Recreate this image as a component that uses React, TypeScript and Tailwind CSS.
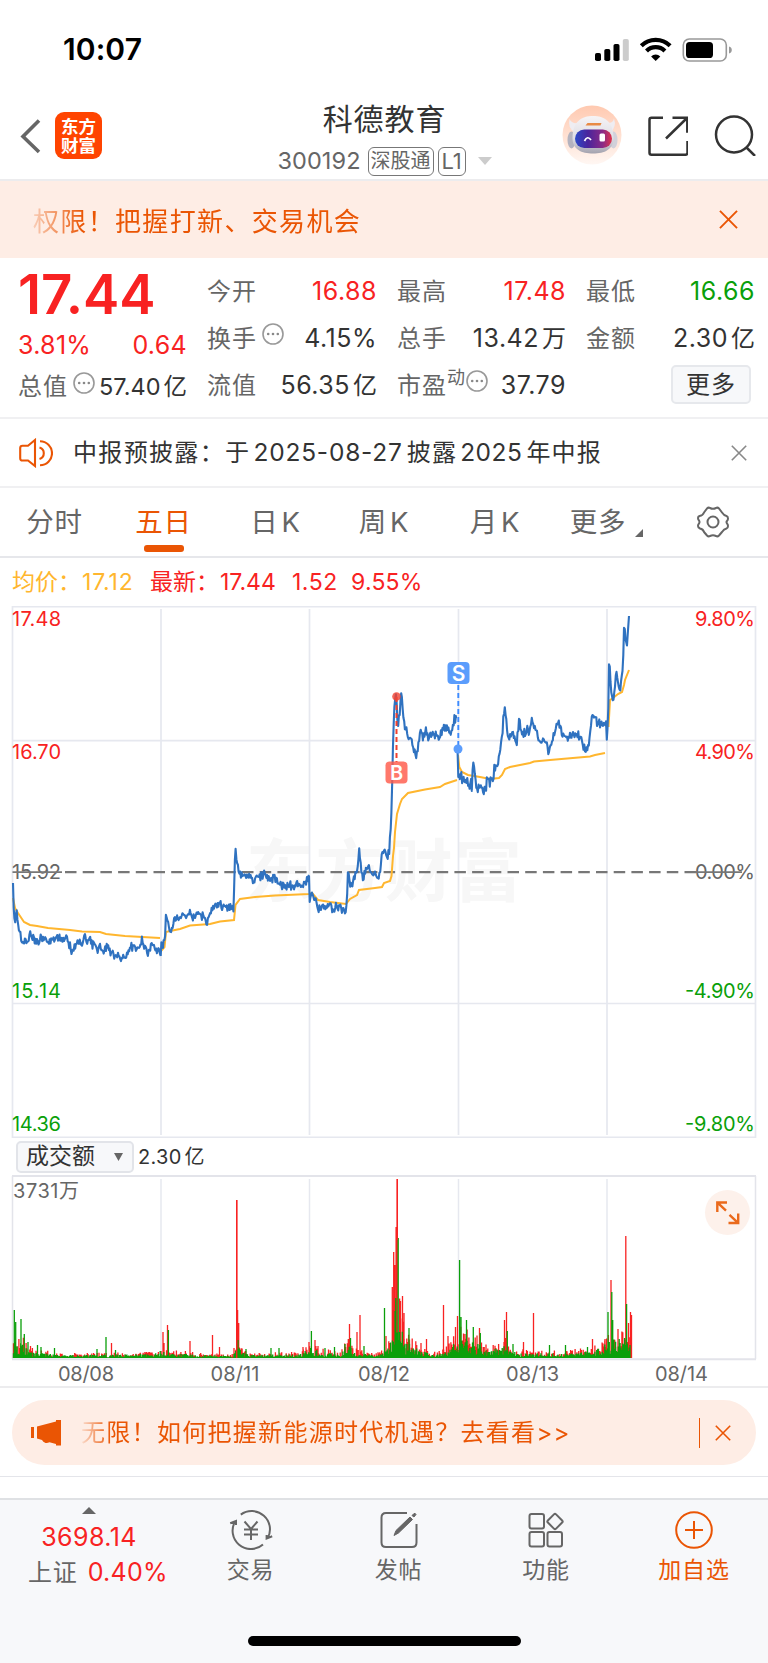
import type { ReactNode } from "react"

type Point = [number, number, number?]

// small seeded generator so the chart always draws the same way
const random = (seed: number) => () => {
  seed = (seed * 16807) % 2147483647
  return seed / 2147483647
}

const interpolate = (points: Point[], x: number) => {
  const i = Math.max(1, points.findIndex((p) => p[0] >= x))
  const [x0, y0] = points[i - 1]
  const [x1, y1] = points[i]
  return y0 + ((y1 - y0) * (x - x0)) / (x1 - x0 || 1)
}

const toPath = (points: Point[]) => "M" + points.map((p) => p[0].toFixed(1) + " " + p[1].toFixed(1)).join("L")

const priceDays: Point[][] = [
  [[13,883],[13.6,912],[15,920],[16.5,910],[18,922],[20,932],[22,942],[23.5,946],[25,938],[27,944],[30,933],[33,936],[35,939],[38,943],[40,936],[44,937],[47,942],[50,941],[54,941],[57,934],[61,941],[66,940],[69,945],[71,949],[74,950],[77,942],[82,944],[84,937],[87,940],[90,938],[93,946],[97,949],[100,947],[103,952],[107,946],[110,950],[114,955],[118,954],[122,959],[126,956],[130,948],[134,946],[138,948],[142,940],[144,947],[148,951],[152,944],[156,950],[160,952],[160.7,956]],
  [[160.7,956],[162,940],[163.5,946],[165,937],[166,911],[168,926],[171,932],[173,925],[176,918],[180,919],[183,914],[187,917],[190,911],[193,919],[198,914],[203,917],[208,921],[211,908],[214,907],[218,902],[222,905],[226,907],[230,909],[233.5,907],[234.2,890],[235.3,845],[237,862],[239,873],[243,876],[247,879],[250,876],[254,881],[260,876],[265,875],[270,878],[275,877],[278,884],[283,886],[290,885],[300,886],[304,885],[308,879],[309,875]],
  [[309,876],[309.6,904],[312,890],[315,900],[318,910],[322,905],[326,910],[330,903],[333,911],[337,906],[340,908],[343,908],[345.5,917],[347,900],[348,866],[350,886],[353,881],[355,874],[357,873],[359,852],[361,866],[363,881],[366,866],[369,869],[372,873],[375,874],[378,880],[381,867],[382,851],[385,849],[387,857],[389,853],[390.3,834],[391.5,812],[393,745],[394.5,704],[395.5,691],[397,712],[398,728],[400,712],[401.5,690],[403,715],[405,727],[407,729],[409,740],[412,739],[414,751],[416,757],[418,747],[421,727],[423,742],[425.5,727],[428,736],[433,733],[440,737],[443,730],[446,726],[450,732],[453,726],[454.5,718],[456,718]],
  [[457.6,752],[458,778],[461,776],[464,780],[467,781],[470,785],[471.5,788],[473,760],[476,785],[479,792],[481,776],[484,794],[487,779],[491,786],[494,768],[497,764],[500,752],[502,735],[504.6,707],[507,726],[509,738],[512,732],[514,738],[516.5,747],[519,722],[523,734],[527,730],[530,733],[532,720],[535,726],[538,736],[541,742],[545,740],[549,752],[552,742],[555,731],[558.5,720],[561,732],[566,737],[570,737],[574,732],[579,737],[582,741],[585,750],[589,744],[591,724],[593,715],[597,722],[601,723],[604,725],[605.4,724],[605.8,710],[606.6,743],[608,725],[609.2,656],[611,690],[613,701],[615,688],[616.3,671],[618,682],[620,694],[622,672],[623,666],[624.2,622],[625.5,640],[627,646],[629,616]],
]

const averageDays: Point[][] = [
  [[13,898],[15,908],[18,913],[24,922],[30,925],[37,926],[48,928],[70,930],[82,931.5],[100,932],[106,934],[125,936],[160,938]],
  [[161,951],[164.5,947],[166,932],[170,931],[180,929],[190,925.5],[210,924],[220,921.5],[234,920],[235.5,905],[240,899],[255,897],[275,895.5],[309,894]],
  [[309,894],[312,893],[318,900],[330,902],[346,904],[350,899],[357,895],[359,890],[375,888],[382,887],[384,883],[390,881],[391.5,876],[393,856],[394,848],[395,832],[397,814],[400,804],[402,799],[408,793],[425,789.5],[440,787],[445,784],[457,780]],
  [[458,755],[459.3,767],[462,772],[468,775],[480,777],[490,779],[499,778],[502,775],[505,769],[510,767],[530,763],[534,761.5],[550,760],[590,756.5],[595,755],[605,753]],
  [[608.5,727],[610,700],[613,698],[618,694],[622,692],[624,685],[625,680],[629,670]],
]

const rand = random(4711)
const pricePath = priceDays
  .map((day) => {
    const out: Point[] = [day[0]]
    for (let x = day[0][0] + 0.7; x < day[day.length - 1][0]; x += 0.75) {
      out.push([x, interpolate(day, x) + (rand() - 0.5) * (x > 458 && x < 495 ? 17 : x > 606 ? 5 : 10) * (rand() > 0.35 ? 1 : 0.4)])
    }
    out.push(day[day.length - 1])
    return toPath(out)
  })
  .join("")
const averagePath = averageDays.map(toPath).join("")

const volumeEnvelope: Point[] = [[13,26],[20,20],[30,8],[45,6],[60,3.5],[150,5],[160,10],[168,6],[185,6],[200,4],[233,3],[238,16],[242,8],[250,4],[300,5],[310,14],[320,8],[332,6],[340,4],[348,18],[356,8],[366,6],[375,3],[383,8],[390,14],[395,75],[399,60],[405,22],[420,12],[430,5],[440,6],[450,12],[458,25],[470,22],[480,17],[490,10],[503,14],[507,20],[515,8],[530,6],[560,6],[590,8],[600,14],[608,22],[615,24],[625,28],[632,34]]
const redSpikes: Point[] = [[30.5,12],[111.5,15],[163,26],[164,15],[167.5,33],[190,17],[212.5,23],[219.5,11],[234,10],[236.7,158],[237.6,48],[238.7,35],[303,11],[309,16],[315,18],[318,12],[349.5,34],[357,26],[360,43],[386,22],[392.3,71],[393.7,106],[395,93],[396.4,131],[397.3,179],[400.5,57],[402.5,62],[404,45],[421,15],[426.5,19],[443.5,53],[448,22],[455.5,31],[457.5,42],[465,24],[479.5,30],[504.5,38],[506.5,46],[523.5,16],[533.5,45],[592.5,19],[605,19],[611,78],[618,29],[625.8,122],[628.5,35],[630.5,46],[631.5,43]]
const greenSpikes: Point[] = [[14.3,48],[15.7,36],[21,39],[24.3,24],[28,16],[37.5,13],[41,11],[54.5,10],[97,9],[106,21],[115.5,8],[168.4,28],[238,18],[246,9],[271,10],[279,10],[311.4,27],[325,10],[334.5,11],[345,14],[350.5,20],[364,12],[384.5,50],[395.8,60],[398.2,120],[409,30],[459.6,98],[461,41],[466.5,38],[473.3,31],[480.3,25],[507.3,27],[513,14],[549.5,13],[565.5,13],[587.5,11],[608,46],[611.8,66],[612.7,38],[626.6,54]]

const bar = (x: number, h: number) => `M${x.toFixed(1)} 1358v${(-h).toFixed(1)}`
let redBars = ""
let greenBars = ""
for (let x = 13.5; x < 631.5; x += 0.9) {
  const h = interpolate(volumeEnvelope, x)
  const up = rand()
  if (up > 0.4 || x > 630) redBars += bar(x, h * (0.4 + rand() * 0.9))
  greenBars += x > 630 ? "" : bar(x, h * (0.15 + rand() * 0.65))
}
redSpikes.forEach((p) => (redBars += bar(p[0], p[1])))
greenSpikes.forEach((p) => (greenBars += bar(p[0], p[1])))

const gridX = [161, 309.5, 458.5, 607]

const axisLabels = [
  { y: 618.5, price: "17.48", pct: "9.80%", fill: "fill-[#f82222]" },
  { y: 751.5, price: "16.70", pct: "4.90%", fill: "fill-[#f82222]" },
  { y: 871.5, price: "15.92", pct: "0.00%", fill: "fill-[#666]" },
  { y: 991, price: "15.14", pct: "-4.90%", fill: "fill-[#0a9f0a]" },
  { y: 1123.5, price: "14.36", pct: "-9.80%", fill: "fill-[#0a9f0a]" },
]

function Dots() {
  return (
    <svg className="size-[22px] shrink-0" viewBox="0 0 22 22" fill="none" stroke="#999" strokeWidth="1.6">
      <circle cx="11" cy="11" r="10" />
      <g fill="#888" stroke="none">
        <circle cx="6.2" cy="11" r="1.3" />
        <circle cx="11" cy="11" r="1.3" />
        <circle cx="15.8" cy="11" r="1.3" />
      </g>
    </svg>
  )
}

function Close({ className }: { className: string }) {
  return (
    <svg className={className} viewBox="0 0 20 20" fill="none" stroke="currentColor" strokeWidth="2">
      <path d="M1 1l18 18M19 1L1 19" />
    </svg>
  )
}

function Stat({ label, value, unit, color = "text-[#333]", mark }: { label: string; value: string; unit?: string; color?: string; mark?: ReactNode }) {
  return (
    <div className="flex h-[47px] items-center justify-between whitespace-nowrap">
      <span className="flex items-center text-2xl tracking-[1px] text-[#666]">
        {label}
        {mark}
      </span>
      <span className={"text-[25px] tracking-[0.5px] " + color}>
        {value}
        {unit && <span className="ml-[3px] text-2xl tracking-normal">{unit}</span>}
      </span>
    </div>
  )
}

function StatusBar() {
  return (
    <div className="flex h-[90px] items-center justify-between pt-2 pr-[35px] pl-[63px]">
      <span className="text-[30px] font-semibold tracking-[0.1px] text-black">10:07</span>
      <svg className="mb-[1px] h-[26px] w-[138px]" viewBox="595 35 138 26">
        <rect x="595" y="52" width="6" height="8" rx="1.8" />
        <rect x="604.3" y="48" width="6" height="12" rx="1.8" />
        <rect x="613.5" y="43" width="6" height="17" rx="1.8" />
        <rect x="622.8" y="38" width="6" height="22" rx="1.8" fill="#ccc" />
        <g fill="none" stroke="#000" strokeWidth="4.2">
          <path d="M641.3 44.7a20.5 20.5 0 0 1 28.8 0" />
          <path d="M646.5 50a13 13 0 0 1 18.4 0" />
        </g>
        <path d="M655.7 60l-4.600-4.600a6.600 6.600 0 0 1 9.200 0z" />
        <rect x="683.3" y="38" width="43" height="22" rx="6" fill="none" stroke="#999" strokeWidth="1.6" />
        <rect x="686" y="41" width="27" height="16" rx="3.6" />
        <path d="M729 45.4v7.200q2.800-.8 2.800-3.600t-2.800-3.600z" fill="#999" />
      </svg>
    </div>
  )
}

function Robot() {
  return (
    <svg className="size-[60px]" viewBox="0 0 60 60">
      <defs>
        <linearGradient id="halo" x1="0" y1="0" x2="0" y2="1">
          <stop offset="0" stopColor="#ffc9b0" />
          <stop offset="1" stopColor="#fff7f3" />
        </linearGradient>
        <linearGradient id="visor">
          <stop offset="0" stopColor="#2c49c8" />
          <stop offset=".35" stopColor="#4a259c" />
          <stop offset=".75" stopColor="#8a2a86" />
          <stop offset="1" stopColor="#e0334a" />
        </linearGradient>
        <linearGradient id="head" x1="0" y1="0" x2="0" y2="1">
          <stop offset="0" stopColor="#f6f4f6" />
          <stop offset=".6" stopColor="#dedde4" />
          <stop offset="1" stopColor="#a3a2ae" />
        </linearGradient>
      </defs>
      <circle cx="30" cy="30" r="29.5" fill="url(#halo)" />
      <path d="M7.500 14q2 5 9 4l-4 9q-7-4-5-13zM52 13.500q-1 5-7 4.500l3 10q7-6 4-14.500z" fill="#efedf2" />
      <ellipse cx="9.500" cy="35" rx="4" ry="8.500" fill="#b4b3bf" />
      <ellipse cx="51.500" cy="35" rx="4" ry="8.500" fill="#d2d1da" />
      <path d="M10.500 33C10.500 16 20 11 31 11s20.500 5 20.500 22c0 11.500-9 15.500-20.500 15.500S10.500 44.500 10.500 33z" fill="url(#head)" />
      <path d="M23.500 20.500l2-2.500h14l-1 2.500z" fill="#e88a45" />
      <rect x="13" y="24.500" width="37" height="18.500" rx="9.200" fill="url(#visor)" />
      <path d="M22.500 36q3-6 6.500-1" fill="none" stroke="#fff" strokeWidth="1.700" />
      <rect x="37.500" y="28.500" width="5.500" height="8" rx="1.500" fill="#fff" />
    </svg>
  )
}

function Header() {
  return (
    <header className="flex h-[91px] items-start justify-between border-b-2 border-[#ececee] pr-[12px] pl-[20px]">
      <div className="flex w-[170px] items-center pt-[22px]">
        <svg className="mr-[14px] h-[36px] w-[21px]" viewBox="0 0 21 36" fill="none" stroke="#666" strokeWidth="3.600">
          <path d="M19 2.500L3 18.500l16 15.500" />
        </svg>
        <div className="flex size-[47px] flex-col items-center justify-center rounded-[9px] bg-[#ff4400] text-[17.500px] leading-[19px] font-bold text-white">
          <span>东方</span>
          <span>财富</span>
        </div>
      </div>
      <div className="flex flex-col items-center pl-[17px]">
        <h1 className="mt-[7px] text-[30px] leading-[44px] tracking-[0.900px] text-[#333]">科德教育</h1>
        <div className="mt-1 flex h-[32px] items-center whitespace-nowrap text-[#666]">
          <span className="mr-[7px] text-[23.500px] tracking-[0.100px]">300192</span>
          <span className="mr-1 flex h-[29px] w-[66px] items-center justify-center rounded-[6px] border border-[#777] text-[20px]">深股通</span>
          <span className="flex h-[29px] w-[28px] items-center justify-center rounded-[6px] border border-[#777] text-[22px]">L1</span>
          <svg className="ml-[12px] h-[8px] w-[14px]" viewBox="0 0 14 8"><path d="M0 0h14L7 8z" fill="#ccc" /></svg>
        </div>
      </div>
      <div className="flex items-center pt-[15px]">
        <Robot />
        <svg className="ml-[24px] size-[42px]" viewBox="0 0 42 42" fill="none" stroke="#333" strokeWidth="2.500">
          <path d="M17 3.700H5.500q-2 0-2 2v33q0 2 2 2h34q2 0 2-2V27M26.500 3.700h14.800v15M41 4L20 24.500" />
        </svg>
        <svg className="ml-[26px] size-[42px]" viewBox="0 0 42 42" fill="none" stroke="#333" strokeWidth="2.500">
          <circle cx="20" cy="20.500" r="18" />
          <path d="M32.500 33.500l8.500 8.500" />
        </svg>
      </div>
    </header>
  )
}

function Quote() {
  return (
    <section className="flex h-[161px] border-b-2 border-[#f0f0f2] pl-[18px] whitespace-nowrap">
      <div className="mr-[20px] w-[169px]">
        <div className="h-[70px] pt-[1px] text-[54.500px] leading-[70px] font-semibold text-[#f82222]">17.44</div>
        <div className="mt-[1px] flex h-[34px] items-center justify-between text-[25px] tracking-[0.300px] text-[#f82222]">
          <span>3.81%</span>
          <span>0.64</span>
        </div>
        <div className="flex h-[48px] items-center justify-between">
          <span className="text-2xl tracking-[1px] text-[#666]">总值</span>
          <span className="mb-[9px]"><Dots /></span>
          <span className="text-[23.500px] text-[#333]">57.40<span className="ml-[3px]">亿</span></span>
        </div>
      </div>
      <div className="mr-[20px] w-[170px] pt-[10px]">
        <Stat label="今开" value="16.88" color="text-[#f82222]" />
        <Stat label="换手" value="4.15%" mark={<span className="mb-[9px] ml-[5px]"><Dots /></span>} />
        <Stat label="流值" value="56.35" unit="亿" />
      </div>
      <div className="mr-[20px] w-[169px] pt-[10px]">
        <Stat label="最高" value="17.48" color="text-[#f82222]" />
        <Stat label="总手" value="13.42" unit="万" />
        <Stat
          label="市盈"
          value="37.79"
          mark={<span className="mb-[10px] flex items-center gap-[1px]"><span className="mb-[6px] text-[18px] leading-5 tracking-normal">动</span><Dots /></span>}
        />
      </div>
      <div className="w-[169px] pt-[10px]">
        <Stat label="最低" value="16.66" color="text-[#0a9f0a]" />
        <Stat label="金额" value="2.30" unit="亿" />
        <div className="flex h-[45px] items-center justify-end pr-1">
          <button className="h-[39px] w-[80px] rounded-[5px] border-2 border-[#e6e8ec] bg-[#f7f8fa] text-2xl leading-[34px] tracking-[1px] text-[#333]">更多</button>
        </div>
      </div>
    </section>
  )
}

function Notice() {
  return (
    <div className="flex h-[69px] items-center border-b-2 border-[#f0f0f2] pr-[21px] pl-[19px]">
      <svg className="mr-[20px] h-[30px] w-[34px]" viewBox="0 0 34 30" fill="none" stroke="#ea5504" strokeWidth="2.100">
        <path d="M16 2v26l-7-5.500H3.500q-2.300 0-2.300-2.300V10q0-2.300 2.300-2.300H9z" />
        <path d="M20.500 9.500a6 6 0 0 1 0 11.500M21 3.200a12 12 0 0 1 0 24" />
      </svg>
      <span className="text-2xl tracking-[1.340px] text-[#333]">中报预披露：于</span>
      <span className="mr-1 ml-[3px] text-[24.500px] tracking-[0.800px] text-[#333]">2025-08-27</span>
      <span className="text-2xl tracking-[1.200px] text-[#333]">披露</span>
      <span className="mr-1 ml-[3px] text-[24.500px] tracking-[0.500px] text-[#333]">2025</span>
      <span className="text-2xl tracking-[1.200px] text-[#333]">年中报</span>
      <Close className="ml-auto size-[16px] text-[#888]" />
    </div>
  )
}

function Tabs() {
  return (
    <nav className="flex h-[70px] items-stretch border-b-2 border-[#e6e7eb] text-[27.500px] tracking-[0.800px] text-[#666] *:flex *:items-center *:justify-center">
      <span className="w-[109px] pt-[2px]">分时</span>
      <span className="relative w-[109px] pt-[2px] text-[#ea5504]">
        五日
        <i className="absolute bottom-1 h-[7px] w-[40px] rounded-[3px] bg-[#ea5504]" />
      </span>
      <span className="w-[115px] gap-[3px] pt-[2px]"><b className="font-normal">日</b>K</span>
      <span className="w-[102px] gap-[3px] pt-[2px]"><b className="font-normal">周</b>K</span>
      <span className="w-[120px] gap-[3px] pt-[2px]"><b className="font-normal">月</b>K</span>
      <span className="w-[103px] pt-[2px]">
        更多
        <svg className="mt-[20px] ml-[9px] size-[8px]" viewBox="0 0 8 8"><path d="M8 0v8H0z" fill="#666" /></svg>
      </span>
      <span className="w-[110px]">
        <svg className="size-[34px]" viewBox="0 0 34 34" fill="none" stroke="#666" strokeWidth="2" strokeLinejoin="round">
          <path d="M11 3.500q1.500-1.500 3-.5 3 1.500 6 0 1.500-1 3 .5l3 4q2 3 4.500 3.500 1.500.5 1.500 2.500 0 1.500-1 2.500-1 1 0 2.500 1 1 1 2.500 0 2-1.500 2.500-2.500.5-4.500 3.500l-3 3.500q-1.500 1.500-3 .5-3-1.500-6 0-1.500 1-3-.5l-3-3.500q-1-3-4-3.500Q2 22.500 2 21q0-1.500 1-2.500 1-1.500 0-3-1-1-1-2.500 0-1.500 1.500-2 3.500-.5 4.500-3.500z" />
          <circle cx="17" cy="17" r="5.500" />
        </svg>
      </span>
    </nav>
  )
}

function Chart() {
  return (
    <section className="h-[830px] border-b-2 border-[#ececee]">
      <div className="flex h-[48px] items-center pl-[12px] text-[23px] whitespace-nowrap text-[#f82222]">
        <span className="w-[70px] shrink-0 text-[#ffb62e]">均价：</span>
        <span className="w-[68px] shrink-0 tracking-[0.800px] text-[#ffb62e]">17.12</span>
        <span className="w-[70px] shrink-0">最新：</span>
        <span className="w-[72px] shrink-0">17.44</span>
        <span className="w-[59px] shrink-0 tracking-[0.500px]">1.52</span>
        <span className="tracking-[0.200px]">9.55%</span>
      </div>
      <svg className="block h-[532px] w-[768px]" viewBox="0 606 768 532">
        <text x="246" y="896" textLength="276" className="fill-[#f7f7f7] text-[68px] font-bold">东方财富</text>
        <g fill="none" stroke="#e6e8ef" strokeWidth="1.700">
          <path d="M12.500 1137.300V606.700H755.500V1137.300z" />
          <path d="M12.500 740.700H755.500M12.500 1003.500H755.500" />
          {gridX.map((x) => <path key={x} d={`M${x} 609V1135`} />)}
        </g>
        {axisLabels.map((l) => (
          <g key={l.y} className={"text-[20px] " + l.fill}>
            <text x="12" y={l.y + 7.300} textLength="49" lengthAdjust="spacing">{l.price}</text>
            <text x="755" y={l.y + 7.300} textAnchor="end" textLength={l.pct.length > 5 ? 70 : 60}>{l.pct}</text>
          </g>
        ))}
        <path d="M12.500 872.200H62M694 872.200H742" stroke="#777" strokeWidth="1.800" />
        <path d="M65 872.200H700" stroke="#777" strokeWidth="2.200" strokeDasharray="11.500 6.200" />
        <path d={averagePath} fill="none" stroke="#ffb62e" strokeWidth="2" />
        <path d={pricePath} fill="none" stroke="#2f72c0" strokeWidth="2.100" strokeLinejoin="round" />
        <path d="M396.500 697V762" stroke="#f2412f" strokeWidth="2" strokeDasharray="5 3" />
        <circle cx="396.500" cy="696.500" r="4.300" fill="#f2412f" fillOpacity=".8" />
        <rect x="385.500" y="761.500" width="22" height="22" rx="4" fill="#ff5a4a" fillOpacity=".82" />
        <text x="396.500" y="779.500" textAnchor="middle" className="fill-white text-[20px] font-semibold">B</text>
        <path d="M458.300 685V745" stroke="#3d8bff" strokeWidth="1.900" strokeDasharray="5 3" />
        <circle cx="458" cy="749" r="4.500" fill="#5b9dfc" />
        <rect x="447.500" y="662" width="22" height="22" rx="4" fill="#5b9dfc" />
        <text x="458.500" y="680.500" textAnchor="middle" className="fill-white text-[21px] font-semibold">S</text>
      </svg>
      <div className="flex h-[37px] items-center pl-4">
        <button className="flex h-[32px] w-[118px] items-center justify-between rounded-[5px] border-2 border-[#e2e4e9] bg-[#f7f8fa] pr-[9px] pl-[8px] text-[23px] text-[#333]">
          成交额
          <svg className="h-[8px] w-[9px]" viewBox="0 0 9 8"><path d="M0 0h9L4.500 8z" fill="#666" /></svg>
        </button>
        <span className="ml-1 text-[20px] tracking-[0.300px] text-[#333]">2.30<span className="ml-[3px]">亿</span></span>
      </div>
      <div className="relative">
        <svg className="block h-[211px] w-[768px]" viewBox="0 1175 768 211">
          <g fill="none" stroke="#e3e4ea" strokeWidth="1.500">
            <path d="M12.500 1176V1359M755.500 1176V1359" />
            <path d="M12 1176H756M12 1359.200H756" strokeWidth="2" />
            {gridX.map((x) => <path key={x} d={`M${x} 1179V1358`} stroke="#e6e8ef" />)}
          </g>
          <path d={redBars} stroke="#f82222" strokeWidth="1.300" />
          <path d={greenBars} stroke="#0a9f0a" strokeWidth="1.300" />
          <path d="M397.300 1179V1240M396.300 1227V1290M236.700 1200V1358" stroke="#f82222" strokeWidth="1.400" />
          <text x="13" y="1198" textLength="66" className="fill-[#666] text-[20px]">3731万</text>
          <g className="fill-[#666] text-[20px]">
            <text x="58" y="1381" textLength="56">08/08</text>
            <text x="210.500" y="1381" textLength="49">08/11</text>
            <text x="358" y="1381" textLength="52">08/12</text>
            <text x="506" y="1381" textLength="53">08/13</text>
            <text x="655" y="1381" textLength="53">08/14</text>
          </g>
        </svg>
        <button className="absolute top-[15px] right-[18px] size-[45px] rounded-full bg-[#fdf1eb]">
          <svg className="size-[45px]" viewBox="0 0 45 45" fill="none" stroke="#ea6a1c" strokeWidth="2.400">
            <path d="M12.300 22V12.500H22M12.500 12.700l8.500 8M33.200 23.500v9.500H23.500M33 32.800l-8.500-8" />
          </svg>
        </button>
      </div>
    </section>
  )
}

function Promo() {
  return (
    <div className="h-[89px] border-b border-[#e4e5ea] px-[12px] pt-[12px]">
      <div className="flex h-[65px] items-center rounded-full bg-[#feede5] pr-[25px] pl-[19px] text-[#ea5504]">
        <svg className="mr-[19px] h-[27px] w-[31px]" viewBox="0 0 31 27" fill="#ea5504">
          <path d="M0 8h3v11H0zM6 7.500L25 2.500V1h5v25.500h-5V25l-6.500-1.700q-2.500 1.200-4 .6-2.500-.8-3.500-2.900L6 19.500z" />
        </svg>
        <span className="text-2xl tracking-[1.300px] whitespace-nowrap [mask-image:linear-gradient(to_right,rgba(0,0,0,0.1),black_30px)]">
          无限！如何把握新能源时代机遇？去看看&gt;&gt;
        </span>
        <i className="ml-auto h-[30px] w-[1.500px] bg-[#ea5504]" />
        <Close className="ml-[15px] size-[16px]" />
      </div>
    </div>
  )
}

function NavItem({ width, label, color = "text-[#666]", children }: { width: string; label: string; color?: string; children: ReactNode }) {
  return (
    <div className={"flex flex-col items-center pt-[10px] " + width + " " + color}>
      <svg className="h-[40px] w-[46px]" viewBox="0 0 46 40" fill="none" stroke="currentColor" strokeWidth="2">
        {children}
      </svg>
      <span className="mt-[3px] text-[23px] leading-[34px] tracking-[0.800px]">{label}</span>
    </div>
  )
}

function BottomBar() {
  return (
    <footer className="h-[165px] border-t-2 border-[#dfe1e4] bg-[#f7f8fa]">
      <div className="flex h-[136px]">
        <div className="flex w-[176px] flex-col items-center pt-[7px] pl-[2px] whitespace-nowrap">
          <svg className="h-[7px] w-[14px]" viewBox="0 0 14 7"><path d="M0 7h14L7 0z" fill="#666" /></svg>
          <span className="mt-[6px] text-[25px] leading-[34px] tracking-[0.400px] text-[#f82222]">3698.14</span>
          <span className="mt-[1px] flex h-[36px] items-center gap-[10px] pl-[18px] text-[#f82222]">
            <span className="text-2xl tracking-[0.800px] text-[#666]">上证</span>
            <span className="text-[25px] tracking-[0.300px]">0.40%</span>
          </span>
        </div>
        <NavItem width="w-[149px]" label="交易">
          <path d="M12.800 4.600A18.300 18.300 0 0 1 39.500 28.500M38.600 25v3.600l5.600-2.300M35 34.500A18.300 18.300 0 0 1 7.300 11.200M8 15v-4l-5.800 2.300" />
          <path d="M16.500 11.500l6.500 7.500 6.500-7.500M23 19v11M16 19.500h14M16 24.500h14" />
        </NavItem>
        <NavItem width="w-[147px]" label="发帖">
          <path d="M31 3H10q-4.500 0-4.500 4.500v25Q5.500 37 10 37h26q4.500 0 4.500-4.500V14" />
          <path d="M18 25.500l2-5L34 7l2.500 2.500L22.500 23zM36 5.500l2-2q1.500-.5 2 1l-2 2.500z" fill="currentColor" strokeWidth="1" />
        </NavItem>
        <NavItem width="w-[148px]" label="功能">
          <rect x="6.500" y="4" width="14.500" height="14.500" rx="2" />
          <rect x="6.500" y="22" width="14.500" height="14.500" rx="2" />
          <rect x="24.500" y="22" width="14.500" height="14.500" rx="2" />
          <rect x="26.200" y="5.700" width="11.600" height="11.600" rx="1.500" transform="rotate(45 32 11.500)" />
        </NavItem>
        <NavItem width="w-[148px]" label="加自选" color="text-[#ea5504]">
          <circle cx="23" cy="20" r="17.800" />
          <path d="M23 11v18M14 20h18" />
        </NavItem>
      </div>
      <div className="mx-auto h-[10px] w-[273px] rounded-full bg-black" />
    </footer>
  )
}

export default function App() {
  return (
    <main className="h-[1663px] w-[768px] overflow-hidden bg-white font-['Inter','Noto_Sans_CJK_SC',sans-serif]">
      <StatusBar />
      <Header />
      <div className="flex h-[77px] items-center justify-between bg-[#feede5] pr-[30px] pl-[33px] text-[#ea5504]">
        <span className="pt-[3px] text-[26px] tracking-[1.340px] [mask-image:linear-gradient(to_right,rgba(0,0,0,0.2),black_50px)]">权限！把握打新、交易机会</span>
        <Close className="mb-[1px] size-[19px]" />
      </div>
      <Quote />
      <Notice />
      <Tabs />
      <Chart />
      <Promo />
      <div className="h-[21px]" />
      <BottomBar />
    </main>
  )
}
